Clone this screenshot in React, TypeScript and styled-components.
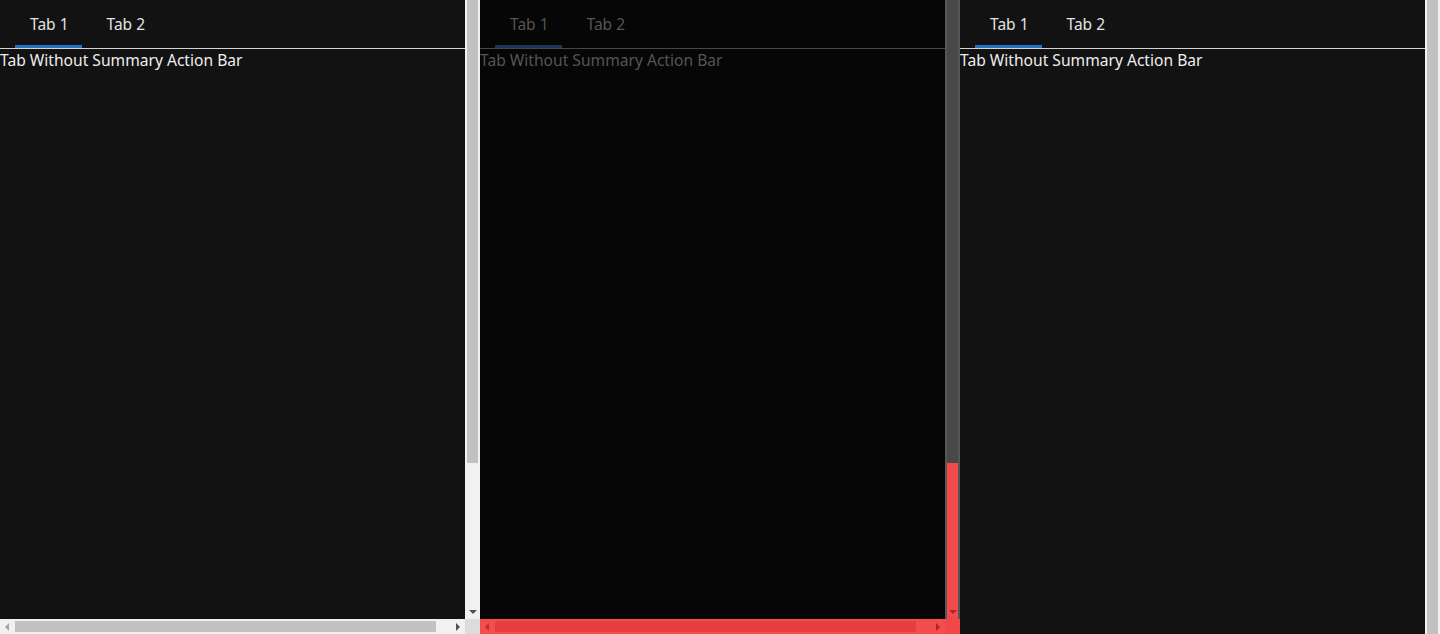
import React from "react";
import styled, { createGlobalStyle } from "styled-components";

const Global = createGlobalStyle`
  html, body { margin: 0; padding: 0; background: #ffffff; }
  body { font-family: "Noto Sans", "Open Sans", sans-serif; overflow: hidden; }
`;

type Tone = { dim?: boolean };

const Page = styled.div`
  display: flex;
  width: 1440px;
  height: 634px;
`;

const Panel = styled.div<{ $hasH: boolean }>`
  display: grid;
  grid-template-columns: 465px 15px;
  grid-template-rows: ${(p) => (p.$hasH ? "619px 15px" : "634px")};
  width: 480px;
  height: 634px;
`;

const Content = styled.div<{ $dim?: boolean }>`
  background: ${(p) => (p.$dim ? "#060606" : "#121212")};
  display: flex;
  flex-direction: column;
  overflow: hidden;
`;

const TabBar = styled.div<{ $dim?: boolean }>`
  display: flex;
  gap: 10px;
  padding-left: 15px;
  height: 48px;
  border-bottom: 1px solid ${(p) => (p.$dim ? "#464646" : "#d4d4d4")};
`;

const Tab = styled.div<{ $active?: boolean; $dim?: boolean }>`
  display: flex;
  align-items: center;
  padding: 3px 13px 0 15px;
  font-size: 15.5px;
  color: ${(p) => (p.$dim ? "#555555" : "#e4e4e4")};
  border-bottom: 3px solid
    ${(p) => (p.$active ? (p.$dim ? "#193754" : "#2271c0") : "transparent")};
`;

const Body = styled.div<{ $dim?: boolean }>`
  font-size: 15.6px;
  line-height: 22px;
  color: ${(p) => (p.$dim ? "#555555" : "#eeeeee")};
`;

const VTrack = styled.div<{ $track: string }>`
  background: ${(p) => p.$track};
  display: flex;
  flex-direction: column;
  padding: 0 2px;
`;

const VThumb = styled.div<{ $color: string; $h: number }>`
  height: ${(p) => p.$h}px;
  background: ${(p) => p.$color};
  flex: none;
`;

const VRest = styled.div<{ $color: string }>`
  flex: 1;
  background: ${(p) => p.$color};
  display: flex;
  align-items: flex-end;
  justify-content: center;
  padding-bottom: 5px;
`;

const HTrack = styled.div<{ $track: string }>`
  background: ${(p) => p.$track};
  display: flex;
  align-items: center;
  padding: 0 5px;
`;

const HThumb = styled.div<{ $color: string }>`
  height: 11px;
  width: 421px;
  margin-left: 6px;
  background: ${(p) => p.$color};
`;

const HSpacer = styled.div`
  flex: 1;
`;

const Corner = styled.div<{ $color: string }>`
  background: ${(p) => p.$color};
`;

const Arrow = ({ dir, color }: { dir: "down" | "left" | "right"; color: string }) => {
  const pts =
    dir === "down" ? "0,0 8,0 4,4" : dir === "left" ? "4,0 4,8 0,4" : "0,0 0,8 4,4";
  const w = dir === "down" ? 8 : 4;
  const h = dir === "down" ? 4 : 8;
  return (
    <svg width={w} height={h} viewBox={`0 0 ${w} ${h}`} style={{ display: "block" }}>
      <polygon points={pts} fill={color} />
    </svg>
  );
};

const TabPanel = ({ dim }: Tone) => (
  <Content $dim={dim}>
    <TabBar $dim={dim}>
      <Tab $active $dim={dim}>Tab 1</Tab>
      <Tab $dim={dim}>Tab 2</Tab>
    </TabBar>
    <Body $dim={dim}>Tab Without Summary Action Bar</Body>
  </Content>
);

export default function App() {
  return (
    <Page>
      <Global />
      <Panel $hasH>
        <TabPanel />
        <VTrack $track="#f1f1f1">
          <VThumb $color="#c1c1c1" $h={463} />
          <VRest $color="#f1f1f1">
            <Arrow dir="down" color="#505050" />
          </VRest>
        </VTrack>
        <HTrack $track="#f1f1f1">
          <Arrow dir="left" color="#a3a3a3" />
          <HThumb $color="#c1c1c1" />
          <HSpacer />
          <Arrow dir="right" color="#505050" />
        </HTrack>
        <Corner $color="#dcdcdc" />
      </Panel>

      <Panel $hasH>
        <TabPanel dim />
        <VTrack $track="#565656">
          <VThumb $color="#484848" $h={463} />
          <VRest $color="#f24a4a">
            <Arrow dir="down" color="#b32222" />
          </VRest>
        </VTrack>
        <HTrack $track="#f44d4d">
          <Arrow dir="left" color="#c62a2a" />
          <HThumb $color="#e63e3e" />
          <HSpacer />
          <Arrow dir="right" color="#b32222" />
        </HTrack>
        <Corner $color="#f04848" />
      </Panel>

      <Panel $hasH={false}>
        <TabPanel />
        <VTrack $track="#f1f1f1">
          <VThumb $color="#c1c1c1" $h={634} />
        </VTrack>
      </Panel>
    </Page>
  );
}
